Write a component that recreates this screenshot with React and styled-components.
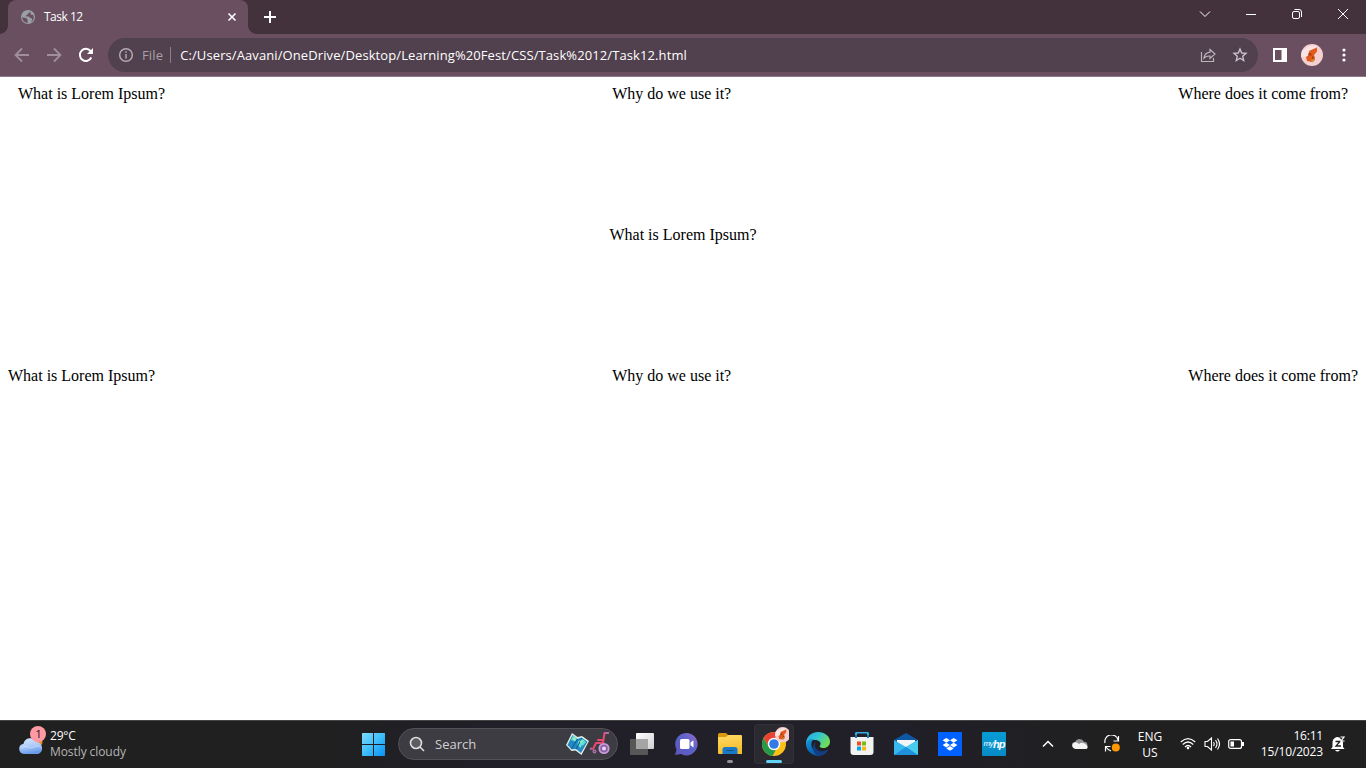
import React from "react";
import styled, { createGlobalStyle } from "styled-components";

const GlobalStyle = createGlobalStyle`
  * { box-sizing: border-box; }
  html, body, #root { margin: 0; height: 100%; }
  body { overflow: hidden; background: #fff; }
  svg { display: block; flex: none; }
`;

const ui = `"Segoe UI", "Open Sans", "Noto Sans", sans-serif`;

const Screen = styled.div`
  width: 1366px;
  height: 768px;
  display: flex;
  flex-direction: column;
  font-family: ${ui};
`;

const Label = styled.span`
  display: block;
  white-space: nowrap;
  font-size: ${(p) => p.$size || 12}px;
  line-height: 16px;
  letter-spacing: ${(p) => p.$track || 0}px;
  color: ${(p) => p.$color || "#fff"};
`;

/* Browser window */
const TabStrip = styled.div`
  height: 34px;
  flex: none;
  display: flex;
  background: #43323b;
`;

const Tab = styled.div`
  position: relative;
  width: 240px;
  height: 34px;
  margin-left: 8px;
  padding: 0 10px 0 13px;
  display: flex;
  align-items: center;
  background: #694f60;
  border-radius: 8px 8px 0 0;
  &::before, &::after {
    content: "";
    position: absolute;
    bottom: 0;
    width: 8px;
    height: 8px;
  }
  &::before {
    left: -8px;
    background: radial-gradient(circle at 0 0, transparent 7.5px, #694f60 8px);
  }
  &::after {
    right: -8px;
    background: radial-gradient(circle at 100% 0, transparent 7.5px, #694f60 8px);
  }
`;

const TabTitle = styled(Label)`
  flex: 1;
  margin-left: 9px;
`;

const NewTab = styled.div`
  margin: 11px 0 0 16px;
`;

const WindowControls = styled.div`
  height: 28px;
  margin-left: auto;
  display: flex;
`;

const ControlCell = styled.div`
  width: 46px;
  height: 28px;
  display: flex;
  align-items: center;
  justify-content: center;
`;

const Toolbar = styled.div`
  height: 43px;
  flex: none;
  display: flex;
  align-items: center;
  padding-left: 14px;
  background: #694f60;
  border-bottom: 1px solid #8f7888;
`;

const NavButtons = styled.div`
  width: 94px;
  flex: none;
  display: flex;
  gap: 16px;
`;

const AddressBar = styled.div`
  width: 1150px;
  height: 34px;
  flex: none;
  border-radius: 17px;
  padding: 0 10px;
  display: flex;
  align-items: center;
  background: #51404d;
`;

const Scheme = styled(Label)`
  margin-left: 8px;
`;

const Divider = styled.i`
  width: 1px;
  height: 16px;
  margin: 0 9px 0 7px;
  background: #8b7d87;
`;

const AddressActions = styled.div`
  margin-left: auto;
  display: flex;
  gap: 16px;
`;

const ToolbarActions = styled.div`
  flex: none;
  margin-left: 14px;
  display: flex;
  align-items: center;
  gap: 13px;
`;

const MenuDots = styled.div`
  margin-left: 6px;
`;

/* Page */
const Page = styled.main`
  flex: 1;
  padding: 8px;
  display: flex;
  flex-direction: column;
  gap: 123px;
  background: #fff;
  color: #000;
  font: 16px/18px "Times New Roman", "Liberation Serif", serif;
`;

const Row = styled.div`
  height: 18px;
  display: flex;
  justify-content: ${(p) => p.$justify || "space-between"};
  padding: 0 ${(p) => p.$pad || 0}px;
`;

const Phrase = styled.div`
  white-space: nowrap;
`;

/* Taskbar */
const Taskbar = styled.footer`
  height: 48px;
  flex: none;
  display: grid;
  grid-template-columns: 353px 663px 1fr;
  background: linear-gradient(90deg, #202020 0, #202020 300px, #211f27 480px, #211f27 900px, #202021 1100px);
  box-shadow: inset 0 1px #434343;
`;

const Weather = styled.div`
  display: flex;
  padding: 4px 0 0 18px;
  gap: 4px;
`;

const Lines = styled.div`
  display: flex;
  flex-direction: column;
  align-items: ${(p) => p.$align || "flex-start"};
`;

const WeatherText = styled(Lines)`
  padding-top: 4px;
`;

const Apps = styled.div`
  display: flex;
  align-items: center;
`;

const AppCell = styled.div`
  position: relative;
  flex: none;
  width: 40px;
  height: 40px;
  margin-right: 4px;
  display: flex;
  align-items: center;
  justify-content: center;
  border-radius: 4px;
  background: ${(p) => (p.$active ? "#2b2a31" : "transparent")};
  box-shadow: ${(p) => (p.$active ? "inset 0 0 0 1px #323138" : "none")};
  &::after {
    content: "";
    display: ${(p) => (p.$active || p.$running ? "block" : "none")};
    position: absolute;
    bottom: 1px;
    width: ${(p) => (p.$active ? 16 : 6)}px;
    height: 3px;
    border-radius: 2px;
    background: ${(p) => (p.$active ? "#62d3f5" : "#929196")};
  }
`;

const SearchBox = styled.div`
  width: 220px;
  height: 32px;
  flex: none;
  margin: 0 4px 0 1px;
  padding: 0 6px 0 10px;
  display: flex;
  align-items: center;
  gap: 10px;
  border: 1px solid #525157;
  border-radius: 16px;
  background: #3d3c42;
`;

const SearchArt = styled.div`
  margin-left: auto;
`;

const HpTile = styled.div`
  width: 24px;
  height: 24px;
  padding-bottom: 1px;
  display: flex;
  align-items: center;
  justify-content: center;
  border-radius: 1px;
  background: linear-gradient(#079bd5, #078bc5);
  color: #fff;
  font: italic 400 8px/24px "Liberation Sans", sans-serif;
  letter-spacing: -0.5px;
  b { font-size: 11px; letter-spacing: -1px; }
`;

const Tray = styled.div`
  display: flex;
  align-items: center;
  padding: 0 12px 0 24px;
`;

const TrayIcon = styled.div`
  width: ${(p) => p.$w}px;
  flex: none;
  display: flex;
  justify-content: center;
`;

const Language = styled(Lines)`
  width: 52px;
  flex: none;
  margin-left: 4px;
  padding-top: 2px;
`;

const Clock = styled(Lines)`
  width: 75px;
  flex: none;
`;

const Stroke = ({ w = 16, h = w, color = "#fff", sw = 1, children }) => (
  <svg width={w} height={h} viewBox={`0 0 ${w} ${h}`} fill="none" stroke={color} strokeWidth={sw}>
    {children}
  </svg>
);

const Globe = () => (
  <svg width="14" height="14" viewBox="0 0 14 14">
    <circle cx="7" cy="7" r="7" fill="#9aa0a6" />
    <path d="M1.2 7.3 5.1 8l1.5 1.5V13C3.2 12.700 1.200 10.200 1.200 7.300ZM8.600 1.500C8.800 3 8 3.300 6.800 3.500L6.300 5 5 5.100v1.300l3 .1 1.100 1.600 1.700.2.400 1.500-1.300 2.200c2.800-1.300 3.600-4.600 2.100-7.300l-1.100.4-1.300-.8V2.600Z" fill="#694f60" />
  </svg>
);

const Avatar = () => (
  <svg width="22" height="22" viewBox="0 0 22 22">
    <circle cx="11" cy="11" r="11" fill="#f6cfd0" />
    <path d="M1 7 8 2l8-.5-7 11L0 13Z" fill="#fae4e3" />
    <path d="m8 7 2-1 6-2.500v4L13 11l1 5-3 2-5-1-1-4 4-3Z" fill="#e45a1c" />
    <path d="m8 8 3 2-1 2-3-1Zm3 4 3 1-3 3Z" fill="#b5410f" />
    <path d="m10 16 3-1-1 4Z" fill="#c69942" />
  </svg>
);

const CloudBadge = () => (
  <svg width="28" height="32" viewBox="0 0 28 32">
    <defs>
      <linearGradient id="cloud" x2=".3" y2="1">
        <stop stopColor="#d9eaff" /><stop offset=".55" stopColor="#b1cdfa" /><stop offset="1" stopColor="#6b9ce9" />
      </linearGradient>
    </defs>
    <circle cx="20" cy="18" r="4.500" fill="#f18a22" />
    <path d="M6 30a5.200 5.200 0 0 1-.5-10.300A7 7 0 0 1 18.500 18a6.200 6.200 0 0 1 1.500 12Z" fill="url(#cloud)" />
    <path d="M4 24c5-4 8 2 12-1 3-2 6-1 8 1" stroke="#e1eeff" opacity=".5" fill="none" />
    <circle cx="20" cy="10" r="8" fill="#ff99a4" />
    <text x="20.500" y="14" textAnchor="middle" fontFamily="Open Sans, sans-serif" fontSize="11.500" fill="#211719">1</text>
  </svg>
);

const StartLogo = () => (
  <svg width="24" height="24" viewBox="0 0 24 24">
    <defs>
      <linearGradient id="win" gradientUnits="userSpaceOnUse" x1="0" y1="0" x2="24" y2="24">
        <stop stopColor="#81e0ff" /><stop offset=".5" stopColor="#40bffa" /><stop offset="1" stopColor="#0792f6" />
      </linearGradient>
    </defs>
    <path d="M1.500 1H12v11H1V1.500ZM13 1h10.500l.5.5V12H13ZM1 13h11v11H1.500l-.5-.5Zm12 0h11v10.500l-.5.500H13Z" fill="url(#win)" />
  </svg>
);

const MapAndChair = () => (
  <svg width="46" height="26" viewBox="0 0 46 26">
    <path d="m7 2 5.500 4L17 5l7 5-7.500 14-6-4.500-4 .5L1 14Z" fill="#e3eee9" />
    <path d="m7.500 4 5 4 4-1.500 6 4.200L16 22l-5-4-4.500.3L2.500 14Z" fill="#2488c2" />
    <path d="m8 4.500 4 3-1.500 3L6 9Zm5 6 4-3 4 3.500-2.500 3-2 1-1 2-3-3Z" fill="#60ded0" />
    <path d="m12.500 8-6 10M17 7l-6 11" stroke="#075b90" fill="none" />
    <path d="m8 7 2-1 1 2-2 2Zm7 3 3-1-2 4Z" fill="#a5ecc1" />
    <path d="M43 2h-3.500L38 12h-7l-3 6m10-9h-5" stroke="#e84970" strokeWidth="2" fill="none" strokeLinecap="round" strokeLinejoin="round" />
    <path d="M44 2h-4M27 17l-2 1.500" stroke="#b16cae" strokeWidth="1.800" />
    <circle cx="39" cy="17.500" r="4.700" fill="#8a62a3" stroke="#c999d8" strokeWidth="1.800" />
    <circle cx="39" cy="17.500" r="2" fill="#ead6f4" />
    <circle cx="29.500" cy="20.500" r="1.500" fill="#7c477c" stroke="#c989c6" />
  </svg>
);

const TaskView = () => (
  <svg width="24" height="24" viewBox="0 0 24 24">
    <defs><linearGradient id="pane" x2="1" y2="1"><stop stopColor="#fff" /><stop offset="1" stopColor="#d0d0d0" /></linearGradient></defs>
    <rect x="6" y="1" width="18" height="16" rx="1" fill="url(#pane)" />
    <rect x="0" y="7" width="18" height="16" rx="1" fill="#575757" />
    <path d="M6 7h12v10H6Z" fill="#a5a5a5" />
  </svg>
);

const Chat = () => (
  <svg width="24" height="24" viewBox="0 0 24 24">
    <defs><linearGradient id="chat" x1="0" y1="1" x2="1" y2="0"><stop stopColor="#6053bc" /><stop offset=".55" stopColor="#5964c8" /><stop offset="1" stopColor="#9a68cb" /></linearGradient></defs>
    <path d="M12 1a11.200 11.200 0 1 1-5 21L1 23l1.500-5.500A11.200 11.200 0 0 1 12 1Z" fill="url(#chat)" />
    <rect x="6" y="7" width="9.500" height="10" rx="1.500" fill="#fff" />
    <path d="m16.500 10.500 2.500-2q.5-.3.500.4v6q0 .7-.5.400l-2.500-2Z" fill="#fff" />
  </svg>
);

const Folder = () => (
  <svg width="24" height="24" viewBox="0 0 24 24">
    <defs><linearGradient id="fold" y2="1" x2=".2"><stop stopColor="#ffda66" /><stop offset="1" stopColor="#f6bc29" /></linearGradient></defs>
    <path d="M0 2.500Q0 1 1.500 1H8l2 2h13q1 0 1 1v6H0Z" fill="#d9980d" />
    <path d="M0 5h8l2-2h12.500Q24 3 24 4.500V22H1q-1 0-1-1Z" fill="url(#fold)" />
    <path d="M4.500 22v-4.500Q4.500 15 7 15h10q2.500 0 2.500 2.500V22Z" fill="#1879c7" />
    <path d="M8.500 18.500h7" stroke="#104f86" strokeWidth="1" />
  </svg>
);

const Chrome = () => (
  <svg width="30" height="34" viewBox="0 0 30 34">
    <circle cx="15" cy="17" r="12" fill="#fbc116" />
    <path d="M4.600 11A12 12 0 0 1 25.400 11H15l-5.200 9Z" fill="#ea4335" />
    <path d="M4.600 11 9.800 20l5.200 3-2.500 5.700A12 12 0 0 1 4.600 11Z" fill="#239b4b" />
    <path d="M9.800 20A6 6 0 0 0 17 22.600L13.500 29 8 26.800Z" fill="#239b4b" />
    <circle cx="15" cy="17" r="6.200" fill="#fff" />
    <circle cx="15" cy="17" r="4.800" fill="#3479e8" />
    <g transform="translate(16 0) scale(.7)"><Avatar /></g>
  </svg>
);

const Edge = () => (
  <svg width="24" height="24" viewBox="0 0 24 24">
    <defs>
      <linearGradient id="edgeTop" x2="1" y2=".5"><stop stopColor="#2b9fe0" /><stop offset=".5" stopColor="#31c6d4" /><stop offset="1" stopColor="#70dd57" /></linearGradient>
      <linearGradient id="edgeBase" x2="1" y2="1"><stop stopColor="#159bdd" /><stop offset=".5" stopColor="#0968b5" /><stop offset="1" stopColor="#164d90" /></linearGradient>
    </defs>
    <path d="M0 12C0 4 6 0 12 0c7 0 12 4.500 12 9.500 0 4-3 6.500-6.500 6.500-3 0-4.500-1-3.500-2.500 2-3-1-5.500-5-5.500C4 8 .5 10.500 0 14Z" fill="url(#edgeTop)" />
    <path d="M0 13c.2-4.500 4-6.500 8-5.500-2 .7-3 3-2.500 6 .7 4.500 5 7 10 6.500 3 0 5-1 7-2.500A12 12 0 0 1 0 13Z" fill="url(#edgeBase)" />
    <path d="M10 10c-2 3-1 8 4 9 3 .6 6 0 8-1.500-1.500 3-5 6.500-9.500 6.500C7 23 5 12 10 10Z" fill="#123f83" />
  </svg>
);

const Store = () => (
  <svg width="24" height="24" viewBox="0 0 24 24">
    <path d="M6 6V2q0-1.500 1.500-1.500h9Q18 .5 18 2v4" fill="none" stroke="#35ace4" strokeWidth="2" />
    <path d="M.5 5h23v15q0 3-3 3h-17q-3 0-3-3Z" fill="#f2f2f2" />
    <path d="M6 6V3m12 3V3" stroke="#1778ab" strokeWidth="2" />
    <path d="M7 9.500h4v4H7Z" fill="#f14e1f" /><path d="M12 9.500h4v4h-4Z" fill="#7fb914" />
    <path d="M7 14.500h4v4H7Z" fill="#08a4ef" /><path d="M12 14.500h4v4h-4Z" fill="#f8b719" />
  </svg>
);

const Mail = () => (
  <svg width="24" height="24" viewBox="0 0 24 24">
    <path d="m0 8 12-7 12 7v5H0Z" fill="#0d57a4" />
    <path d="M3 8h18v4l-9 4-9-4Z" fill="#f2f5f8" />
    <path d="m0 8 12 7L24 8v15H0Z" fill="#37b8ef" />
    <path d="m12 15 12 8V8Z" fill="#48cbed" />
    <path d="m0 23 12-8 12 8Z" fill="#1f90dc" />
  </svg>
);

const Dropbox = () => (
  <svg width="24" height="24" viewBox="0 0 24 24">
    <path d="M0 0h24v24H0Z" fill="#0061fe" />
    <path d="m8.300 6 3.700 2.300-3.700 2.400-3.700-2.400Zm7.400 0 3.700 2.300-3.700 2.400L12 8.300ZM8.300 10.700l3.700 2.400-3.700 2.300-3.700-2.300Zm7.400 0 3.700 2.400-3.700 2.300-3.700-2.300ZM12 14l3.700 2.400-3.700 2.300-3.700-2.300Z" fill="#fff" />
  </svg>
);

const Bell = () => (
  <svg width="16" height="16" viewBox="0 0 16 16">
    <path d="M2.500 11V6a5 5 0 0 1 7-4.500L13 6v5l1.500 2H1Z" fill="#fff" />
    <path d="M5 14h5q-2.500 3-5 0Z" fill="#fff" />
    <path d="M5.500 5.500h4.500l-4 4.500h5" fill="none" stroke="#202020" strokeWidth="1.300" />
    <path d="M10.500 1H14l-3 4h3.500" fill="none" stroke="#fff" strokeWidth="1.200" />
  </svg>
);

const Headings = ({ pad }) => (
  <Row $pad={pad}>
    <Phrase>What is Lorem Ipsum?</Phrase>
    <Phrase>Why do we use it?</Phrase>
    <Phrase>Where does it come from?</Phrase>
  </Row>
);

export default function App() {
  return (
    <Screen>
      <GlobalStyle />
      <TabStrip>
        <Tab>
          <Globe />
          <TabTitle $track={-0.5}>Task 12</TabTitle>
          <Stroke w={12} sw={1.6}><path d="m2.500 2.500 7 7m0-7-7 7" /></Stroke>
        </Tab>
        <NewTab><Stroke w={12} sw={2}><path d="M6 0v12M0 6h12" /></Stroke></NewTab>
        <WindowControls>
          <ControlCell><Stroke w={12}><path d="m1 3.500 5 5 5-5" /></Stroke></ControlCell>
          <ControlCell><Stroke w={12}><path d="M1 6.500h10" /></Stroke></ControlCell>
          <ControlCell><Stroke w={12}><rect x="1.500" y="3.500" width="7" height="7" rx="1.500" /><path d="M3.500 1.500H8q2.500 0 2.500 2.500v5" /></Stroke></ControlCell>
          <ControlCell><Stroke w={12}><path d="m1 1 10 10m0-10L1 11" /></Stroke></ControlCell>
        </WindowControls>
      </TabStrip>
      <Toolbar>
        <NavButtons>
          <Stroke color="#a08f9a" sw={1.8}><path d="M15 8H2M8 1.500 1.500 8 8 14.500" /></Stroke>
          <Stroke color="#a08f9a" sw={1.8}><path d="M1 8h13M8 1.500 14.500 8 8 14.500" /></Stroke>
          <Stroke sw={2}><path d="M13.300 10.500A6 6 0 1 1 12.500 4" /><path d="M15 1v6H9Z" fill="#fff" stroke="none" /></Stroke>
        </NavButtons>
        <AddressBar>
          <Stroke color="#b4aab1" sw={1.5}><circle cx="8" cy="8" r="6.300" /><path d="M8 7v4.500M8 4.200v1.600" /></Stroke>
          <Scheme $size={13} $color="#aaa0a7" $track={0.15}>File</Scheme>
          <Divider />
          <Label $size={13} $track={0.1}>C:/Users/Aavani/OneDrive/Desktop/Learning%20Fest/CSS/Task%2012/Task12.html</Label>
          <AddressActions>
            <Stroke color="#bdb4ba" sw={1.2}><path d="M1.500 5v9.500h12V11" /><path d="M10 2.500 15 7l-5 4.500V9Q6 8.800 4 11q.5-5 6-5.800Z" /></Stroke>
            <Stroke color="#c9c1c6" sw={1.4}><path d="m8 2 1.700 4 4.300.4-3.300 2.800 1 4.300L8 11.200l-3.700 2.300 1-4.300L2 6.400 6.300 6Z" /></Stroke>
          </AddressActions>
        </AddressBar>
        <ToolbarActions>
          <Stroke sw={2}><rect x="2" y="2" width="12" height="12" /><path d="M9.500 1H15v14H9.500Z" fill="#fff" stroke="none" /></Stroke>
          <Avatar />
          <MenuDots>
            <svg width="4" height="14" viewBox="0 0 4 14" fill="#fff"><circle cx="2" cy="2" r="1.600" /><circle cx="2" cy="7" r="1.600" /><circle cx="2" cy="12" r="1.600" /></svg>
          </MenuDots>
        </ToolbarActions>
      </Toolbar>

      <Page>
        <Headings pad={10} />
        <Row $justify="center"><Phrase>What is Lorem Ipsum?</Phrase></Row>
        <Headings pad={0} />
      </Page>

      <Taskbar>
        <Weather>
          <CloudBadge />
          <WeatherText>
            <Label $track={-0.2}>29°C</Label>
            <Label $color="#b5b5b5" $track={-0.08}>Mostly cloudy</Label>
          </WeatherText>
        </Weather>
        <Apps>
          <AppCell><StartLogo /></AppCell>
          <SearchBox>
            <Stroke color="#dededf" sw={1.6}><circle cx="7" cy="7" r="5.500" fill="#5d5c61" /><path d="m11 11 4 4" /></Stroke>
            <Label $size={13} $color="#d0d0d2">Search</Label>
            <SearchArt><MapAndChair /></SearchArt>
          </SearchBox>
          <AppCell><TaskView /></AppCell>
          <AppCell><Chat /></AppCell>
          <AppCell $running><Folder /></AppCell>
          <AppCell $active><Chrome /></AppCell>
          <AppCell><Edge /></AppCell>
          <AppCell><Store /></AppCell>
          <AppCell><Mail /></AppCell>
          <AppCell><Dropbox /></AppCell>
          <AppCell><HpTile>my<b>hp</b></HpTile></AppCell>
        </Apps>
        <Tray>
          <TrayIcon $w={16}><Stroke w={12} sw={1.5}><path d="m1 8.500 5-5 5 5" /></Stroke></TrayIcon>
          <TrayIcon $w={48}>
            <svg width="16" height="12" viewBox="0 0 16 12"><path d="M3 10a3 3 0 0 1 0-6 5 5 0 0 1 9-.3A3.200 3.200 0 0 1 13 10Z" fill="#929292" /><path d="M4 11a3.500 3.500 0 0 1-3-5.500Q4 3 7 6q4-3 8 1.500Q17 11 13 11Z" fill="#f4f4f4" /></svg>
          </TrayIcon>
          <TrayIcon $w={16}>
            <Stroke w={16} h={18} sw={1.2}><path d="M1 8A6.500 6.500 0 0 1 14 5M14.500 1v5h-5M7 16Q4 15 1.500 11.500M1.500 16.500v-5h5" /><circle cx="11.800" cy="12.500" r="4" fill="#ff9800" stroke="none" /></Stroke>
          </TrayIcon>
          <Language $align="center"><Label>ENG</Label><Label>US</Label></Language>
          <TrayIcon $w={24}>
            <Stroke sw={1.2}><path d="M.8 6Q8-.8 15.200 6M2.800 8.500q5.200-5 10.400 0M5 11q3-3 6 0" /><circle cx="8" cy="12" r="1.300" fill="#fff" stroke="none" /></Stroke>
          </TrayIcon>
          <TrayIcon $w={24}>
            <Stroke sw={1.1}><path d="M1 5.500h2.500L7.500 2v12L3.500 10.500H1ZM9.500 6q1.400 2 0 4M11.500 4.200q3 3.800 0 7.600M13.500 2.500q4 5.500 0 11" /></Stroke>
          </TrayIcon>
          <TrayIcon $w={24}>
            <Stroke w={16} h={12} sw={1.2}><rect x=".7" y="1.600" width="12.800" height="8.800" rx="2" /><path d="M2.500 3.500H6v5H2.500ZM14 4h2v4h-2Z" fill="#fff" stroke="none" /></Stroke>
          </TrayIcon>
          <Clock $align="flex-end"><Label $track={-0.2}>16:11</Label><Label $track={-0.15}>15/10/2023</Label></Clock>
          <TrayIcon $w={30}><Bell /></TrayIcon>
        </Tray>
      </Taskbar>
    </Screen>
  );
}
